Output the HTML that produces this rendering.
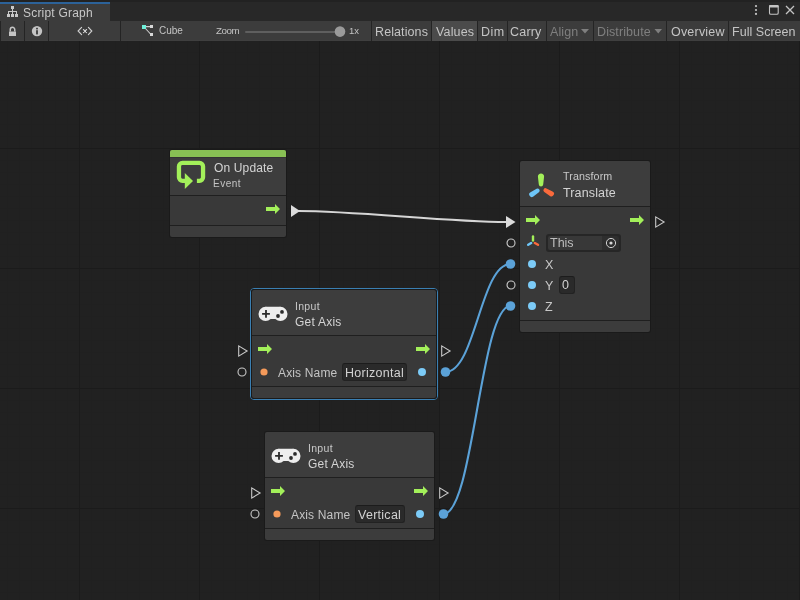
<!DOCTYPE html>
<html><head><meta charset="utf-8">
<style>
*{margin:0;padding:0;box-sizing:border-box}
html,body{width:800px;height:600px;overflow:hidden;background:#202020;font-family:"Liberation Sans",sans-serif;color:#c4c4c4;-webkit-font-smoothing:antialiased}
.a{position:absolute}
.t{white-space:nowrap;line-height:1;will-change:transform}
svg{position:absolute;overflow:visible}
</style></head><body>
<svg style="left:0;top:0" width="800" height="600">
<defs>
<pattern id="minor" x="7" y="4" width="12" height="12" patternUnits="userSpaceOnUse">
<rect x="0" y="0" width="1" height="12" fill="#202020"/><rect x="0" y="0" width="12" height="1" fill="#202020"/>
</pattern>
<pattern id="major" x="79" y="28" width="120" height="120" patternUnits="userSpaceOnUse">
<rect x="0" y="0" width="1" height="120" fill="#1b1b1b"/><rect x="0" y="0" width="120" height="1" fill="#1b1b1b"/>
</pattern>
</defs>
<rect x="0" y="0" width="800" height="600" fill="#212121"/>
<rect x="0" y="0" width="800" height="600" fill="url(#minor)"/>
<rect x="0" y="0" width="800" height="600" fill="url(#major)"/>
</svg>
<div class="a" style="left:0px;top:0px;width:800px;height:21px;background:#282828;"></div>
<div class="a" style="left:0px;top:0px;width:800px;height:2px;background:#222222;"></div>
<div class="a" style="left:0px;top:2px;width:110px;height:2px;background:#2c6299;"></div>
<div class="a" style="left:0px;top:4px;width:110px;height:17px;background:#3c3c3c;"></div>
<svg style="left:0;top:0" width="30" height="21">
<g fill="#c8c8c8">
<rect x="11" y="6" width="3" height="3"/>
<rect x="12" y="9" width="1" height="3"/>
<rect x="8" y="11" width="9" height="1"/>
<rect x="8" y="11" width="1" height="3"/><rect x="12" y="11" width="1" height="3"/><rect x="16" y="11" width="1" height="3"/>
<rect x="7" y="14" width="3" height="3"/><rect x="11" y="14" width="3" height="3"/><rect x="15" y="14" width="3" height="3"/>
</g></svg>
<div class="a t" style="left:22.7px;top:6.54px;font-size:12px;color:#c8c8c8;letter-spacing:0.2px;">Script Graph</div>
<svg style="left:740px;top:0" width="60" height="21">
<g fill="#c4c4c4">
<circle cx="16" cy="6.1" r="1.1"/><circle cx="16" cy="10" r="1.1"/><circle cx="16" cy="13.9" r="1.1"/>
</g>
<rect x="29.5" y="5.5" width="8.7" height="8.8" rx="1.3" fill="none" stroke="#c4c4c4" stroke-width="1.1"/>
<rect x="29" y="5" width="9.7" height="2.6" rx="1" fill="#c4c4c4"/>
<path d="M46 6 L54 14 M54 6 L46 14" stroke="#c4c4c4" stroke-width="1.3"/>
</svg>
<div class="a" style="left:0px;top:21px;width:800px;height:20px;background:#3c3c3c;"></div>
<div class="a" style="left:0px;top:40px;width:800px;height:1px;background:#3f3f3f;"></div>
<div class="a" style="left:0px;top:21px;width:1px;height:20px;background:#242424;"></div>
<div class="a" style="left:24px;top:21px;width:1px;height:20px;background:#242424;"></div>
<div class="a" style="left:48px;top:21px;width:1px;height:20px;background:#242424;"></div>
<div class="a" style="left:120px;top:21px;width:1px;height:20px;background:#242424;"></div>
<div class="a" style="left:371px;top:21px;width:1px;height:20px;background:#242424;"></div>
<div class="a" style="left:431px;top:21px;width:1px;height:20px;background:#242424;"></div>
<div class="a" style="left:477px;top:21px;width:1px;height:20px;background:#242424;"></div>
<div class="a" style="left:507px;top:21px;width:1px;height:20px;background:#242424;"></div>
<div class="a" style="left:546px;top:21px;width:1px;height:20px;background:#242424;"></div>
<div class="a" style="left:593px;top:21px;width:1px;height:20px;background:#242424;"></div>
<div class="a" style="left:666px;top:21px;width:1px;height:20px;background:#242424;"></div>
<div class="a" style="left:728px;top:21px;width:1px;height:20px;background:#242424;"></div>
<div class="a" style="left:432px;top:21px;width:45px;height:20px;background:#4b4b4b;"></div>
<svg style="left:0;top:21px" width="24" height="20">
<path d="M10.25 10.5 V8.5 A2.25 2.25 0 0 1 14.75 8.5 V10.5" fill="none" stroke="#c4c4c4" stroke-width="1.5"/>
<rect x="9" y="10.5" width="7" height="4.5" fill="#c4c4c4"/>
</svg>
<svg style="left:24px;top:21px" width="24" height="20">
<circle cx="13" cy="10.1" r="5.2" fill="#c4c4c4"/>
<rect x="12.2" y="6.8" width="1.6" height="1.6" fill="#2a2a2a"/>
<rect x="12.2" y="9.2" width="1.6" height="4.2" fill="#2a2a2a"/>
</svg>
<svg style="left:48px;top:21px" width="72" height="20">
<path d="M33.6 6.3 L30.1 10 L33.6 13.6 M40.4 6.3 L43.8 10 L40.4 13.6" fill="none" stroke="#cfcfcf" stroke-width="1.15" stroke-linecap="round"/><path d="M35.4 8.5 L38.6 11.6 M38.6 8.5 L35.4 11.6" fill="none" stroke="#cfcfcf" stroke-width="1.1" stroke-linecap="round"/><rect x="36.2" y="9.3" width="1.8" height="1.8" fill="#d8d8d8"/>
</svg>
<svg style="left:120px;top:21px" width="40" height="20">
<path d="M25 5.6 L31 5.6 M25 7 L31 13.5" stroke="#d0d0d0" stroke-width="1.1"/>
<rect x="22" y="4" width="4" height="4" fill="#6ff0da"/>
<rect x="30" y="4" width="3" height="3" fill="#d8d8d8"/>
<rect x="30" y="12" width="3" height="3" fill="#d8d8d8"/>
</svg>
<div class="a t" style="left:159px;top:26.33px;font-size:10px;color:#c4c4c4;">Cube</div>
<div class="a t" style="left:216px;top:26.00px;font-size:9.8px;color:#c4c4c4;letter-spacing:-0.5px;">Zoom</div>
<div class="a" style="left:245px;top:31px;width:95px;height:2px;background:#5f5f5f;border-radius:1px"></div>
<svg style="left:0;top:0" width="800" height="41"><circle cx="340" cy="31.6" r="5.3" fill="#9a9a9a"/></svg>
<div class="a t" style="left:349.3px;top:26.46px;font-size:9.5px;color:#c4c4c4;">1x</div>
<div class="a t" style="left:375.2px;top:25.72px;font-size:12.5px;color:#c4c4c4;letter-spacing:0.1px;">Relations</div>
<div class="a t" style="left:436.2px;top:25.72px;font-size:12.5px;color:#c4c4c4;letter-spacing:0.15px;">Values</div>
<div class="a t" style="left:481px;top:25.72px;font-size:12.5px;color:#c4c4c4;letter-spacing:0.5px;">Dim</div>
<div class="a t" style="left:510px;top:25.72px;font-size:12.5px;color:#c4c4c4;letter-spacing:0.2px;">Carry</div>
<div class="a t" style="left:549.5px;top:25.72px;font-size:12.5px;color:#7f7f7f;letter-spacing:0.1px;">Align</div>
<div class="a t" style="left:596.5px;top:25.72px;font-size:12.5px;color:#7f7f7f;letter-spacing:0.1px;">Distribute</div>
<div class="a t" style="left:670.5px;top:25.72px;font-size:12.5px;color:#c4c4c4;letter-spacing:0.2px;">Overview</div>
<div class="a t" style="left:731.6px;top:25.72px;font-size:12.5px;color:#c4c4c4;letter-spacing:0.03px;">Full Screen</div>
<svg style="left:0;top:0" width="800" height="41">
<path d="M581 29 L589 29 L585 33.5 Z" fill="#7f7f7f"/>
<path d="M654.5 29 L662 29 L658.25 33.5 Z" fill="#7f7f7f"/>
</svg>
<svg style="left:0;top:0" width="800" height="600">
<path d="M298 211 C358 211 447 222 507 222" fill="none" stroke="#d6d6d6" stroke-width="2.2"/>
<path d="M291 205 L300 211 L291 217 Z" fill="#dcdcdc"/>
<path d="M506 216 L515.5 222 L506 228 Z" fill="#dcdcdc"/>
<path d="M445.5 372 C475.5 372 480.5 264 510.5 264" fill="none" stroke="#5ba2d8" stroke-width="2.1"/>
<path d="M443.5 514 C473.5 514 480.5 306 510.5 306" fill="none" stroke="#5ba2d8" stroke-width="2.1"/>
<circle cx="445.5" cy="372" r="4.8" fill="#5ba2d8"/>
<circle cx="510.5" cy="264" r="4.8" fill="#5ba2d8"/>
<circle cx="443.5" cy="514" r="4.8" fill="#5ba2d8"/>
<circle cx="510.5" cy="306" r="4.8" fill="#5ba2d8"/>
</svg>
<div class="a" style="left:169px;top:149px;width:118px;height:89px;background:#1a1a1a;border-radius:3px"></div>
<div class="a" style="left:170px;top:150px;width:116px;height:45px;background:#3d3d3d;border-radius:2px 2px 0 0"></div>
<div class="a" style="left:170px;top:195px;width:116px;height:1px;background:#1f1f1f;"></div>
<div class="a" style="left:170px;top:196px;width:116px;height:29px;background:#393939;"></div>
<div class="a" style="left:170px;top:225px;width:116px;height:1px;background:#1f1f1f;"></div>
<div class="a" style="left:170px;top:226px;width:116px;height:11px;background:#3c3c3c;border-radius:0 0 2px 2px"></div>
<div class="a" style="left:170px;top:150px;width:116px;height:7px;background:#88c054;border-radius:2px 2px 0 0"></div>
<div class="a" style="left:170px;top:157px;width:116px;height:1px;background:#333333;"></div>
<svg style="left:170px;top:150px" width="40" height="45">
<path d="M15 30.8 H12.45 A3.5 3.5 0 0 1 8.95 27.3 V16.45 A3.5 3.5 0 0 1 12.45 12.95 H29.55 A3.5 3.5 0 0 1 33.05 16.45 V27.3 A3.5 3.5 0 0 1 29.55 30.8 H26.9" fill="none" stroke="#a3f05a" stroke-width="4.3"/>
<path d="M14.8 23 L23 30.9 L14.8 38.9 Z" fill="#a3f05a"/>
</svg>
<div class="a t" style="left:213.5px;top:161.64px;font-size:12px;color:#d4d4d4;letter-spacing:0.15px;">On Update</div>
<div class="a t" style="left:212.8px;top:179.44px;font-size:10px;color:#c4c4c4;letter-spacing:0.5px;">Event</div>
<svg style="left:266px;top:204px" width="14" height="10"><path d="M0 3 H9 V0 L14 5 L9 10 V7 H0 Z" fill="#a3f05a"/></svg>
<div class="a" style="left:519px;top:160px;width:132px;height:173px;background:#1a1a1a;border-radius:3px"></div>
<div class="a" style="left:520px;top:161px;width:130px;height:45px;background:#3d3d3d;border-radius:2px 2px 0 0"></div>
<div class="a" style="left:520px;top:206px;width:130px;height:1px;background:#1f1f1f;"></div>
<div class="a" style="left:520px;top:207px;width:130px;height:113px;background:#393939;"></div>
<div class="a" style="left:520px;top:320px;width:130px;height:1px;background:#1f1f1f;"></div>
<div class="a" style="left:520px;top:321px;width:130px;height:11px;background:#3c3c3c;border-radius:0 0 2px 2px"></div>
<svg style="left:520px;top:161px" width="40" height="45"><path d="M17.92 15.86 L18.81 23.55 A2.2 2.2 0 0 0 23.19 23.55 L24.08 15.86 A3.1 3.1 0 1 0 17.92 15.86 Z" fill="#a3f05a"/><path d="M13.38 35.47 L18.87 31.27 A2.1 2.1 0 0 0 16.58 27.77 L10.54 31.13 A2.6 2.6 0 1 0 13.38 35.47 Z" fill="#6ec6f8"/><path d="M32.56 30.47 L26.44 27.42 A2.1 2.1 0 0 0 24.30 31.02 L29.91 34.93 A2.6 2.6 0 1 0 32.56 30.47 Z" fill="#fa6a3c"/></svg>
<div class="a t" style="left:563.3px;top:170.94px;font-size:10.7px;color:#c8c8c8;letter-spacing:0.12px;">Transform</div>
<div class="a t" style="left:563.3px;top:186.92px;font-size:12.5px;color:#d4d4d4;letter-spacing:0.13px;">Translate</div>
<svg style="left:526px;top:215px" width="14" height="10"><path d="M0 3 H9 V0 L14 5 L9 10 V7 H0 Z" fill="#a3f05a"/></svg>
<svg style="left:630px;top:215px" width="14" height="10"><path d="M0 3 H9 V0 L14 5 L9 10 V7 H0 Z" fill="#a3f05a"/></svg>
<svg style="left:654.5px;top:216px" width="11" height="12"><path d="M0.7 0.9 L9.1 6 L0.7 11.1 Z" fill="none" stroke="#c8c8c8" stroke-width="1.1" stroke-linejoin="miter"/></svg>
<svg style="left:520px;top:228px" width="30" height="22">
<path d="M13 8.5 V12.5" stroke="#a3f05a" stroke-width="2.4" stroke-linecap="round"/>
<path d="M8.2 16.8 L11.2 15" stroke="#6ec6f8" stroke-width="2.4" stroke-linecap="round"/>
<path d="M14.8 15 L18 16.8" stroke="#fa6a3c" stroke-width="2.4" stroke-linecap="round"/>
</svg>
<div class="a" style="left:546px;top:234px;width:75px;height:18px;background:#262626;border-radius:3px"></div>
<div class="a" style="left:548px;top:236px;width:54px;height:14px;background:#383838;border-radius:2px 0 0 2px"></div>
<div class="a" style="left:602px;top:236px;width:17px;height:14px;background:#2e2e2e;border-radius:0 2px 2px 0"></div>
<div class="a t" style="left:550.3px;top:237.22px;font-size:12.5px;color:#bdbdbd;">This</div>
<svg style="left:604px;top:236px" width="14" height="14"><circle cx="7" cy="7" r="4.6" fill="none" stroke="#d0d0d0" stroke-width="1"/><circle cx="7" cy="7" r="1.6" fill="#d8d8d8"/></svg>
<svg style="left:504.5px;top:237px" width="12" height="12"><circle cx="6" cy="6" r="4.0" fill="none" stroke="#c8c8c8" stroke-width="1.1"/></svg>
<svg style="left:504.5px;top:279px" width="12" height="12"><circle cx="6" cy="6" r="4.0" fill="none" stroke="#c8c8c8" stroke-width="1.1"/></svg>
<svg style="left:525.8px;top:258px" width="12" height="12"><circle cx="6" cy="6" r="4" fill="#7ccbf7"/></svg>
<div class="a t" style="left:544.8px;top:259.22px;font-size:12.5px;color:#c8c8c8;">X</div>
<svg style="left:525.8px;top:279px" width="12" height="12"><circle cx="6" cy="6" r="4" fill="#7ccbf7"/></svg>
<div class="a t" style="left:544.8px;top:280.22px;font-size:12.5px;color:#c8c8c8;">Y</div>
<svg style="left:525.8px;top:300px" width="12" height="12"><circle cx="6" cy="6" r="4" fill="#7ccbf7"/></svg>
<div class="a t" style="left:544.8px;top:301.22px;font-size:12.5px;color:#c8c8c8;">Z</div>
<div class="a" style="left:559px;top:276px;width:16px;height:18px;background:#2a2a2a;border:1px solid #222;border-top-color:#1c1c1c;border-radius:3px"></div>
<div class="a t" style="left:562.4px;top:278.92px;font-size:12.5px;color:#d2d2d2;">0</div>
<div class="a" style="left:250px;top:288px;width:188px;height:112px;border:1px solid #3a7fb2;border-radius:4px"></div>
<div class="a" style="left:251px;top:289px;width:186px;height:110px;background:#1a1a1a;border-radius:3px"></div>
<div class="a" style="left:252px;top:290px;width:184px;height:45px;background:#3d3d3d;border-radius:2px 2px 0 0"></div>
<div class="a" style="left:252px;top:335px;width:184px;height:1px;background:#1f1f1f;"></div>
<div class="a" style="left:252px;top:336px;width:184px;height:50px;background:#393939;"></div>
<div class="a" style="left:252px;top:386px;width:184px;height:1px;background:#1f1f1f;"></div>
<div class="a" style="left:252px;top:387px;width:184px;height:11px;background:#3c3c3c;border-radius:0 0 2px 2px"></div>
<svg style="left:258px;top:306px" width="32" height="18">
<circle cx="7.6" cy="7.9" r="7.1" fill="#eeeeee"/><circle cx="22.4" cy="7.9" r="7.1" fill="#eeeeee"/>
<path d="M7.6 0.8 H22.4 V12 Q18 12.6 17 13.1 H13 Q12 12.6 7.6 12 Z" fill="#eeeeee"/>
<path d="M4.1 7.9 H11.9 M8 4 V11.8" stroke="#2b2b2b" stroke-width="1.8"/>
<circle cx="24" cy="5.9" r="1.9" fill="#2b2b2b"/><circle cx="20" cy="10" r="1.9" fill="#2b2b2b"/>
</svg>
<div class="a t" style="left:294.8px;top:300.51px;font-size:10.5px;color:#c8c8c8;letter-spacing:0.3px;">Input</div>
<div class="a t" style="left:294.8px;top:315.84px;font-size:12px;color:#d4d4d4;letter-spacing:0.24px;">Get Axis</div>
<svg style="left:237.5px;top:345px" width="11" height="12"><path d="M0.7 0.9 L9.1 6 L0.7 11.1 Z" fill="none" stroke="#c8c8c8" stroke-width="1.1" stroke-linejoin="miter"/></svg>
<svg style="left:236.3px;top:366px" width="12" height="12"><circle cx="6" cy="6" r="4.0" fill="none" stroke="#c8c8c8" stroke-width="1.1"/></svg>
<svg style="left:258px;top:344px" width="14" height="10"><path d="M0 3 H9 V0 L14 5 L9 10 V7 H0 Z" fill="#a3f05a"/></svg>
<svg style="left:416px;top:344px" width="14" height="10"><path d="M0 3 H9 V0 L14 5 L9 10 V7 H0 Z" fill="#a3f05a"/></svg>
<svg style="left:440.5px;top:345px" width="11" height="12"><path d="M0.7 0.9 L9.1 6 L0.7 11.1 Z" fill="none" stroke="#c8c8c8" stroke-width="1.1" stroke-linejoin="miter"/></svg>
<svg style="left:257.5px;top:366px" width="12" height="12"><circle cx="6" cy="6" r="3.6" fill="#f59a5a"/></svg>
<div class="a t" style="left:278px;top:366.84px;font-size:12px;color:#c4c4c4;letter-spacing:0.15px;">Axis Name</div>
<div class="a" style="left:342px;top:363px;width:65px;height:18px;background:#2a2a2a;border:1px solid #222;border-top-color:#1c1c1c;border-radius:3px"></div>
<div class="a t" style="left:344.6px;top:367.02px;font-size:12.5px;color:#d2d2d2;letter-spacing:0.27px;">Horizontal</div>
<svg style="left:415.8px;top:366px" width="12" height="12"><circle cx="6" cy="6" r="4" fill="#7ccbf7"/></svg>
<div class="a" style="left:264px;top:431px;width:171px;height:110px;background:#1a1a1a;border-radius:3px"></div>
<div class="a" style="left:265px;top:432px;width:169px;height:45px;background:#3d3d3d;border-radius:2px 2px 0 0"></div>
<div class="a" style="left:265px;top:477px;width:169px;height:1px;background:#1f1f1f;"></div>
<div class="a" style="left:265px;top:478px;width:169px;height:50px;background:#393939;"></div>
<div class="a" style="left:265px;top:528px;width:169px;height:1px;background:#1f1f1f;"></div>
<div class="a" style="left:265px;top:529px;width:169px;height:11px;background:#3c3c3c;border-radius:0 0 2px 2px"></div>
<svg style="left:271px;top:448px" width="32" height="18">
<circle cx="7.6" cy="7.9" r="7.1" fill="#eeeeee"/><circle cx="22.4" cy="7.9" r="7.1" fill="#eeeeee"/>
<path d="M7.6 0.8 H22.4 V12 Q18 12.6 17 13.1 H13 Q12 12.6 7.6 12 Z" fill="#eeeeee"/>
<path d="M4.1 7.9 H11.9 M8 4 V11.8" stroke="#2b2b2b" stroke-width="1.8"/>
<circle cx="24" cy="5.9" r="1.9" fill="#2b2b2b"/><circle cx="20" cy="10" r="1.9" fill="#2b2b2b"/>
</svg>
<div class="a t" style="left:308.1px;top:442.71px;font-size:10.5px;color:#c8c8c8;letter-spacing:0.3px;">Input</div>
<div class="a t" style="left:308.1px;top:458.04px;font-size:12px;color:#d4d4d4;letter-spacing:0.24px;">Get Axis</div>
<svg style="left:250.5px;top:487px" width="11" height="12"><path d="M0.7 0.9 L9.1 6 L0.7 11.1 Z" fill="none" stroke="#c8c8c8" stroke-width="1.1" stroke-linejoin="miter"/></svg>
<svg style="left:249.3px;top:508px" width="12" height="12"><circle cx="6" cy="6" r="4.0" fill="none" stroke="#c8c8c8" stroke-width="1.1"/></svg>
<svg style="left:271px;top:486px" width="14" height="10"><path d="M0 3 H9 V0 L14 5 L9 10 V7 H0 Z" fill="#a3f05a"/></svg>
<svg style="left:414px;top:486px" width="14" height="10"><path d="M0 3 H9 V0 L14 5 L9 10 V7 H0 Z" fill="#a3f05a"/></svg>
<svg style="left:438.5px;top:487px" width="11" height="12"><path d="M0.7 0.9 L9.1 6 L0.7 11.1 Z" fill="none" stroke="#c8c8c8" stroke-width="1.1" stroke-linejoin="miter"/></svg>
<svg style="left:270.5px;top:508px" width="12" height="12"><circle cx="6" cy="6" r="3.6" fill="#f59a5a"/></svg>
<div class="a t" style="left:291px;top:508.84px;font-size:12px;color:#c4c4c4;letter-spacing:0.15px;">Axis Name</div>
<div class="a" style="left:355px;top:505px;width:50px;height:18px;background:#2a2a2a;border:1px solid #222;border-top-color:#1c1c1c;border-radius:3px"></div>
<div class="a t" style="left:357.6px;top:509.22px;font-size:12.5px;color:#d2d2d2;letter-spacing:0.27px;">Vertical</div>
<svg style="left:413.8px;top:508px" width="12" height="12"><circle cx="6" cy="6" r="4" fill="#7ccbf7"/></svg>
</body></html>
